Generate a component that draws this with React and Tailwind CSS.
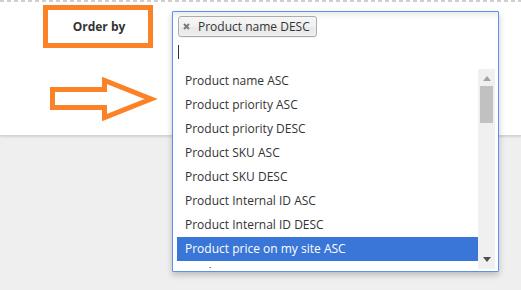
import React from "react";

const options = [
  "Product name ASC",
  "Product priority ASC",
  "Product priority DESC",
  "Product SKU ASC",
  "Product SKU DESC",
  "Product Internal ID ASC",
  "Product Internal ID DESC",
  "Product price on my site ASC",
  "Product price on my site DESC",
];

const highlighted = 7;

const ArrowOutline = () => (
  <svg width="112" height="52" viewBox="48 72 112 52" className="block">
    <polygon
      points="52.5,87.5 104.5,87.5 104.5,78.5 151,97 104.5,115.5 104.5,105.5 52.5,105.5"
      fill="none"
      stroke="#fb8226"
      strokeWidth="5"
      strokeLinejoin="miter"
    />
  </svg>
);

const App = () => {
  return (
    <div className="w-[521px] h-[290px] overflow-hidden bg-[#efefef] font-['Open_Sans',sans-serif] text-[#333]">
      <div className="h-[136px] bg-white border-b border-[#d4d4d4] shadow-[0_1px_2px_rgba(0,0,0,0.12)]">
        <div className="h-[2px] bg-[repeating-linear-gradient(90deg,#cfcfcf_0_4px,transparent_4px_7px)]"></div>
        <div className="flex">
          {/* Label + pointer */}
          <div className="w-[172px] shrink-0">
            <div className="ml-[43px] mt-[3px] w-[110px] h-[43px] border-[5px] border-[#fb8226] flex items-center justify-center">
              <span className="text-[12px] font-bold text-[#333] leading-none pl-[2px]">Order by</span>
            </div>
            <div className="ml-[48px] mt-[26px]">
              <ArrowOutline />
            </div>
          </div>

          {/* Chosen-like multiselect */}
          <div className="relative z-10 mt-[9px] w-[327px] h-[261px] border border-[#5b92f0] rounded-[1px] bg-white shadow-[0_3px_6px_rgba(0,0,0,0.22)] flex flex-col">
            <div className="h-[52px] shrink-0 px-[5px] bg-[linear-gradient(#eee_1%,#fff_15%)]">
              <div className="mt-[3px] inline-flex items-center h-[21px] pl-[4px] pr-[6px] border border-[#aaa] rounded-[3px] bg-[linear-gradient(#f4f4f4_20%,#f0f0f0_50%,#e8e8e8_52%,#eee_100%)] shadow-[inset_0_0_2px_#fff,0_1px_0_rgba(0,0,0,0.05)]">
                <svg width="7" height="7" viewBox="0 0 7 7" className="mr-[8px]">
                  <path d="M1 1L6 6M6 1L1 6" stroke="#7a7a7a" strokeWidth="2" />
                </svg>
                <span className="text-[12px] leading-none text-[#333]">Product name DESC</span>
              </div>
              <div className="mt-[8px] w-px h-[14px] bg-[#333]"></div>
            </div>

            <div className="flex pl-[4px] pr-[3px] pt-[4px] h-[204px] shrink-0">
              <ul className="flex-1 overflow-hidden pt-[1px]">
                {options.map((opt, i) => (
                  <li
                    key={opt}
                    className={
                      i === highlighted
                        ? "h-[24px] shrink-0 flex items-center pl-[8px] text-[12px] text-white bg-[#3a76d7]"
                        : "h-[24px] shrink-0 flex items-center pl-[8px] text-[12px] text-[#333]"
                    }
                  >
                    {opt}
                  </li>
                ))}
              </ul>
              <div className="w-[17px] h-[200px] mt-[1px] bg-[#f0f0f0] flex flex-col items-center">
                <svg width="8" height="5" viewBox="0 0 8 5" className="mt-[7px]">
                  <path d="M0 5L4 0L8 5Z" fill="#a3a3a3" />
                </svg>
                <div className="mt-[5px] w-[13px] h-[37px] bg-[#c1c1c1]"></div>
                <div className="flex-1"></div>
                <svg width="8" height="5" viewBox="0 0 8 5" className="mb-[7px]">
                  <path d="M0 0L8 0L4 5Z" fill="#505050" />
                </svg>
              </div>
            </div>
          </div>
        </div>
      </div>
    </div>
  );
};

export default App;
